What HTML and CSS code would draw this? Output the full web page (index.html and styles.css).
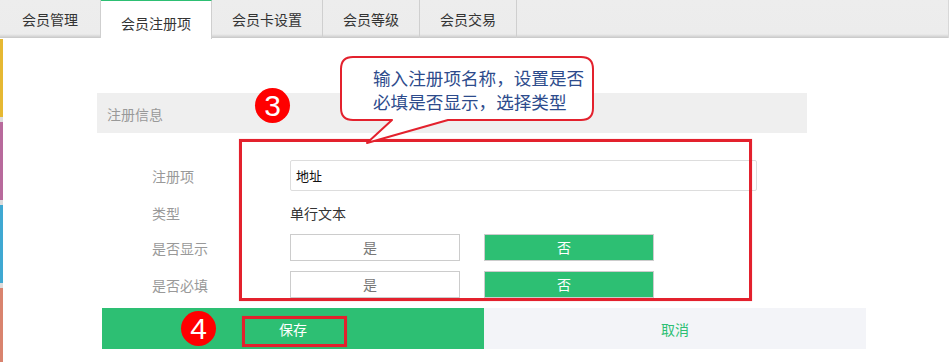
FILE: index.html
```html
<!DOCTYPE html>
<html lang="zh-CN">
<head>
<meta charset="utf-8">
<title>会员注册项</title>
<link rel="stylesheet" href="styles.css">
</head>
<body>
<div class="tabs">
  <div class="tab t1">会员管理</div>
  <div class="tab t2 active">会员注册项</div>
  <div class="tab t3">会员卡设置</div>
  <div class="tab t4">会员等级</div>
  <div class="tab t5">会员交易</div>
  <div class="tab-fill"></div>
</div>
<div class="main">
  <div class="strip">
    <span class="seg yellow"></span>
    <span class="gap"></span>
    <span class="seg purple"></span>
    <span class="gap"></span>
    <span class="seg blue"></span>
    <span class="gap"></span>
    <span class="seg salmon"></span>
  </div>
  <div class="content">
    <div class="section-head">注册信息</div>
    <div class="form">
      <div class="label">注册项</div>
      <div class="field"><div class="input">地址</div></div>
      <div class="label">类型</div>
      <div class="field"><span class="value">单行文本</span></div>
      <div class="label">是否显示</div>
      <div class="field choices"><div class="choice">是</div><div class="choice on">否</div></div>
      <div class="label">是否必填</div>
      <div class="field choices"><div class="choice">是</div><div class="choice on">否</div></div>
    </div>
    <div class="actions">
      <div class="btn-save">保存</div>
      <div class="btn-cancel">取消</div>
    </div>
  </div>
</div>

<div class="callout">
  <svg class="callout-shape" width="256" height="90" viewBox="0 0 256 90">
    <path d="M13 1 H241 Q253 1 253 13 V52 Q253 64 241 64 H108 L27 87 L52 64 H13 Q1 64 1 52 V13 Q1 1 13 1 Z" fill="#ffffff" stroke="#e3212d" stroke-width="2" stroke-linejoin="round"/>
  </svg>
  <div class="callout-text">输入注册项名称，设置是否<br>必填是否显示，选择类型</div>
</div>
<div class="mark mark-form"></div>
<div class="mark mark-save"></div>
<div class="badge badge-3">3</div>
<div class="badge badge-4">4</div>
</body>
</html>
```

FILE: styles.css
```css
* { box-sizing: border-box; }
html, body { margin: 0; padding: 0; }
body {
  width: 949px;
  height: 362px;
  overflow: hidden;
  background: #ffffff;
  font-family: "Noto Sans CJK SC", "Noto Sans", sans-serif;
  font-size: 14px;
  color: #333;
  position: relative;
}

/* tabs */
.tabs {
  display: flex;
  height: 38px;
  background: linear-gradient(#ededed 0, #ececec 34px, #dadada 36px, #c6c6c6 38px);
}
.tab {
  height: 38px;
  line-height: 38px;
  text-align: center;
  color: #333;
  font-size: 14px;
  border-right: 1px solid #cfcfcf;
  flex: none;
}
.t1 { width: 101px; }
.t2 { width: 111px; }
.t3 { width: 111px; }
.t4 { width: 97px; }
.t5 { width: 97px; }
.tab.active {
  background: #ffffff;
  border-top: 1px solid #2dbf73;
  height: 39px;
  line-height: 44px;
  position: relative;
  z-index: 1;
}
.tab-fill {
  flex: 1;
  border-right: 1px solid #d8d8d8;
}

/* main */
.main {
  display: flex;
  align-items: flex-start;
}
.strip {
  width: 3px;
  display: flex;
  flex-direction: column;
  flex: none;
  margin-top: 1px;
}
.strip .seg { display: block; height: 78px; }
.strip .gap { display: block; height: 5px; background: #dcdcdc; }
.strip .salmon { height: 80px; }
.yellow { background: #e6b832; }
.purple { background: #b86a9c; }
.blue { background: #3fa8d2; }
.salmon { background: #d9836e; }

.content {
  padding-left: 94px;
  flex: 1;
}
.section-head {
  margin-top: 55px;
  width: 710px;
  height: 40px;
  line-height: 42px;
  background: #efefef;
  color: #999;
  padding-left: 10px;
  font-size: 14px;
}

.form {
  margin-top: 27px;
  display: grid;
  grid-template-columns: 193px 467px;
  grid-template-rows: 31px 23px 27px 27px;
  row-gap: 10px;
}
.label {
  padding-left: 55px;
  color: #999;
  font-size: 14px;
  display: flex;
  align-items: center;
}
.field {
  display: flex;
  align-items: center;
}
.input {
  width: 467px;
  height: 31px;
  border: 1px solid #dddddd;
  border-radius: 2px;
  padding-left: 5px;
  line-height: 29px;
  font-size: 13px;
  color: #111;
}
.value {
  font-size: 14px;
  color: #333;
}
.choices { gap: 24px; }
.choice {
  width: 170px;
  height: 27px;
  border: 1px solid #cccccc;
  background: #ffffff;
  color: #777;
  text-align: center;
  line-height: 25px;
  padding-right: 10px;
  font-size: 14px;
}
.choice.on {
  background: #2dbf73;
  color: #ffffff;
}

.actions {
  margin-top: 10px;
  margin-left: 5px;
  display: flex;
  width: 764px;
  height: 41px;
}
.btn-save, .btn-cancel {
  flex: 1;
  text-align: center;
  line-height: 42px;
  font-size: 14px;
}
.btn-save { background: #2dbf73; color: #ffffff; }
.btn-cancel { background: #f3f4f8; color: #2dbf73; }

/* annotations */
.callout {
  position: absolute;
  left: 340px;
  top: 56px;
  width: 256px;
  height: 90px;
  z-index: 5;
}
.callout-shape {
  position: absolute;
  left: 0;
  top: 0;
  display: block;
}
.callout-text {
  position: absolute;
  left: 33px;
  top: 10px;
  font-size: 17.6px;
  line-height: 24px;
  color: #2d4b8c;
  white-space: nowrap;
}
.mark {
  position: absolute;
  border: 3px solid #e3212d;
  box-shadow: 0 0 1px rgba(227, 33, 45, 0.4);
  z-index: 4;
}
.mark-form {
  left: 239px;
  top: 139px;
  width: 513px;
  height: 162px;
}
.mark-save {
  left: 242px;
  top: 316px;
  width: 105px;
  height: 31px;
}
.badge {
  position: absolute;
  width: 35px;
  height: 35px;
  border-radius: 50%;
  background: #ff0000;
  color: #ffffff;
  font-family: "Liberation Sans", "DejaVu Sans", sans-serif;
  font-size: 30px;
  line-height: 35px;
  text-align: center;
  z-index: 6;
}
.badge-3 { left: 255px; top: 88px; }
.badge-4 { left: 181px; top: 311px; }
```
